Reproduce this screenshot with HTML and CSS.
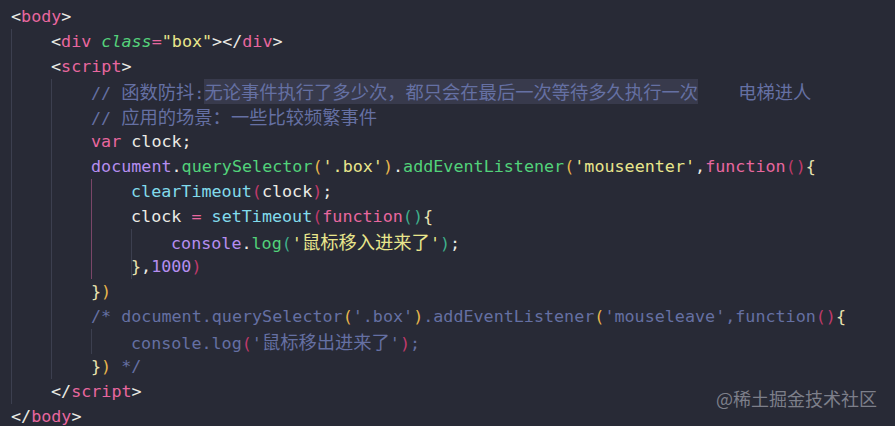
FILE: index.html
```html
<!DOCTYPE html>
<html lang="zh-CN">
<head>
<meta charset="utf-8">
<title>code</title>
<link rel="stylesheet" href="styles.css">
</head>
<body>
<div class="editor">
<div class="line"><span class="p">&lt;</span><span class="t">body</span><span class="p">&gt;</span></div>
<div class="line"><span class="ind g"></span><span class="p">&lt;</span><span class="t">div</span> <span class="a">class</span><span class="t">=</span><span class="s">"box"</span><span class="p">&gt;&lt;/</span><span class="t">div</span><span class="p">&gt;</span></div>
<div class="line"><span class="ind g"></span><span class="p">&lt;</span><span class="t">script</span><span class="p">&gt;</span></div>
<div class="line"><span class="ind g"></span><span class="ind g"></span><span class="c">// <span class="cj">函数防抖</span>:<span class="hl"><span class="cj">无论事件执行了多少次，都只会在最后一次等待多久执行一次</span></span>    <span class="cj">电梯进人</span></span></div>
<div class="line"><span class="ind g"></span><span class="ind g"></span><span class="c">// <span class="cj">应用的场景：一些比较频繁事件</span></span></div>
<div class="line"><span class="ind g"></span><span class="ind g"></span><span class="k">var</span> <span class="p">clock;</span></div>
<div class="line"><span class="ind g"></span><span class="ind g"></span><span class="o">document</span><span class="p">.</span><span class="f">querySelector</span><span class="b1">(</span><span class="s">'.box'</span><span class="b1">)</span><span class="p">.</span><span class="f">addEventListener</span><span class="b1">(</span><span class="s">'mouseenter'</span><span class="p">,</span><span class="k">function</span><span class="b2">()</span><span class="br">{</span></div>
<div class="line"><span class="ind g"></span><span class="ind g"></span><span class="ind gp"></span><span class="fc">clearTimeout</span><span class="b2">(</span><span class="p">clock</span><span class="b2">)</span><span class="p">;</span></div>
<div class="line"><span class="ind g"></span><span class="ind g"></span><span class="ind gp"></span><span class="p">clock </span><span class="k">=</span> <span class="fc">setTimeout</span><span class="b2">(</span><span class="k">function</span><span class="b3">()</span><span class="br">{</span></div>
<div class="line"><span class="ind g"></span><span class="ind g"></span><span class="ind gp"></span><span class="ind g"></span><span class="o">console</span><span class="p">.</span><span class="f">log</span><span class="b3">(</span><span class="s">'<span class="cj">鼠标移入进来了</span>'</span><span class="b3">)</span><span class="p">;</span></div>
<div class="line"><span class="ind g"></span><span class="ind g"></span><span class="ind gp"></span><span class="ind0 g"></span><span class="br">}</span><span class="p">,</span><span class="n">1000</span><span class="b2">)</span></div>
<div class="line"><span class="ind g"></span><span class="ind g"></span><span class="br">}</span><span class="b1">)</span></div>
<div class="line"><span class="ind g"></span><span class="ind g"></span><span class="c">/* document.querySelector</span><span class="b1">(</span><span class="c">'.box'</span><span class="b1">)</span><span class="c">.addEventListener</span><span class="b1">(</span><span class="c">'mouseleave',function</span><span class="b2">()</span><span class="br">{</span></div>
<div class="line"><span class="ind g"></span><span class="ind g"></span><span class="ind g"></span><span class="c">console.log</span><span class="b2">(</span><span class="c">'<span class="cj">鼠标移出进来了</span>'</span><span class="b2">)</span><span class="c">;</span></div>
<div class="line"><span class="ind g"></span><span class="ind g"></span><span class="br">}</span><span class="b1">)</span><span class="c"> */</span></div>
<div class="line"><span class="ind g"></span><span class="p">&lt;/</span><span class="t">script</span><span class="p">&gt;</span></div>
<div class="line"><span class="p">&lt;/</span><span class="t">body</span><span class="p">&gt;</span></div>
</div>
<div class="watermark">@稀土掘金技术社区</div>
</body>
</html>
```

FILE: styles.css
```css
html, body {
  margin: 0;
  padding: 0;
}
body {
  width: 895px;
  height: 426px;
  overflow: hidden;
  background: #282a36;
  position: relative;
}
.editor {
  padding: 4px 0 0 11px;
  font-family: "DejaVu Sans Mono", "Liberation Mono", monospace;
  font-size: 16.73px;
  color: #f0f0ea;
}
.line {
  height: 25px;
  line-height: 25px;
  white-space: pre;
}
.ind {
  display: inline-block;
  width: 40px;
  height: 25px;
  vertical-align: top;
  box-sizing: border-box;
}
.ind0 {
  display: inline-block;
  width: 0;
  height: 25px;
  vertical-align: top;
  margin-right: -1px;
}
.g { border-left: 1px solid #3c3f4f; }
.gp { border-left: 1px solid #7a4668; }
.cj {
  font-family: "Noto Sans CJK SC", sans-serif;
  font-size: 18.3px;
  line-height: 25px;
}
.hl {
  display: inline-block;
  height: 25px;
  vertical-align: top;
  background: #383a4c;
}
.p { color: #ecece6; }
.t { color: #e8679f; }
.a { color: #55d27b; font-style: italic; }
.s { color: #e9e68c; }
.c { color: #6570a3; }
.k { color: #e8679f; }
.o { color: #b68ef0; }
.f { color: #52d27a; }
.fc { color: #82dbec; }
.n { color: #b68ef0; }
.b1 { color: #e8b74c; }
.b2 { color: #c03a6c; }
.b3 { color: #3fb08c; }
.br { color: #e9e4b0; }
.watermark {
  position: absolute;
  right: 18px;
  top: 387px;
  font-family: "Noto Sans CJK SC", sans-serif;
  font-size: 18px;
  line-height: 22px;
  color: #7d7f8a;
}
```
